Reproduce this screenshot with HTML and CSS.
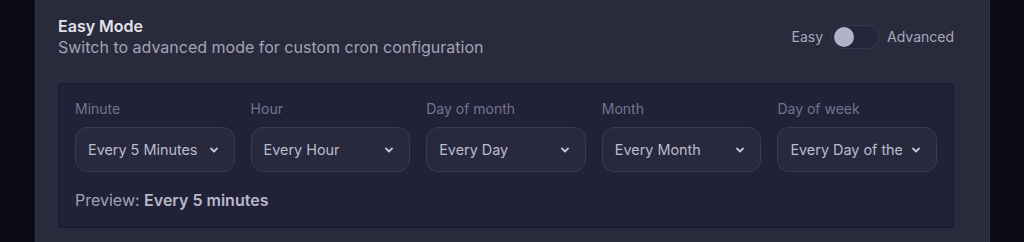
FILE: index.html
```html
<!DOCTYPE html>
<html lang="en">
<head>
    <meta charset="UTF-8">
    <meta name="viewport" content="width=device-width, initial-scale=1.0">
    <title>Schedule</title>
    <link rel="stylesheet" href="styles.css">
</head>
<body>
    <div class="card">
        <div class="card-header">
            <div class="titles">
                <h2>Easy Mode</h2>
                <p>Switch to advanced mode for custom cron configuration</p>
            </div>
            <div class="mode-switch">
                <span>Easy</span>
                <span class="toggle"><span class="knob"></span></span>
                <span>Advanced</span>
            </div>
        </div>

        <div class="cron-panel">
            <div class="cron-fields">
                <div class="field">
                    <label>Minute</label>
                    <div class="select"><span class="value">Every 5 Minutes</span><svg viewBox="0 0 12 12"><path d="M3 4.5l3 3 3-3"/></svg></div>
                </div>
                <div class="field">
                    <label>Hour</label>
                    <div class="select"><span class="value">Every Hour</span><svg viewBox="0 0 12 12"><path d="M3 4.5l3 3 3-3"/></svg></div>
                </div>
                <div class="field">
                    <label>Day of month</label>
                    <div class="select"><span class="value">Every Day</span><svg viewBox="0 0 12 12"><path d="M3 4.5l3 3 3-3"/></svg></div>
                </div>
                <div class="field">
                    <label>Month</label>
                    <div class="select"><span class="value">Every Month</span><svg viewBox="0 0 12 12"><path d="M3 4.5l3 3 3-3"/></svg></div>
                </div>
                <div class="field">
                    <label>Day of week</label>
                    <div class="select"><span class="value">Every Day of the Week</span><svg viewBox="0 0 12 12"><path d="M3 4.5l3 3 3-3"/></svg></div>
                </div>
            </div>
            <div class="preview">Preview: <strong>Every 5 minutes</strong></div>
        </div>
    </div>
</body>
</html>
```

FILE: styles.css
```css
body {
    margin: 0;
    height: 242px;
    overflow: hidden;
    background: #0b0b17;
    font-family: Inter, "Noto Sans", sans-serif;
}

.card {
    margin-left: 35px;
    width: 955px;
    height: 242px;
    box-sizing: border-box;
    padding: 16px 35px 0 22px;
    background: #2a2a3d;
    border-left: 1px solid #34344a;
    border-right: 1px solid #34344a;
}

.card-header {
    display: flex;
    justify-content: space-between;
    align-items: center;
}

.titles h2 {
    margin: 0;
    font-size: 16px;
    line-height: 20px;
    font-weight: 600;
    color: #e2e2ea;
}

.titles p {
    margin: 1px 0 0;
    font-size: 16px;
    line-height: 20px;
    color: #a3a3b4;
}

.mode-switch {
    display: flex;
    align-items: center;
    gap: 8px;
    font-size: 14px;
    color: #a8a8ba;
}

.toggle {
    display: flex;
    align-items: center;
    width: 48px;
    height: 24px;
    box-sizing: border-box;
    padding: 0 2px;
    border: 1px solid #37374d;
    border-radius: 12px;
    background: #26263a;
}

.knob {
    width: 20px;
    height: 20px;
    border-radius: 50%;
    background: #b2b2c8;
}

.cron-panel {
    margin-top: 26px;
    padding: 16px 16px 17px;
    background: #212138;
    border: 1px solid #17173a;
    border-radius: 4px;
}

.cron-fields {
    display: grid;
    grid-template-columns: repeat(5, minmax(0, 1fr));
    gap: 16px;
}

.field label {
    display: block;
    font-size: 14px;
    line-height: 18px;
    color: #74748e;
    margin-bottom: 9px;
}

.select {
    display: flex;
    align-items: center;
    gap: 8px;
    height: 45px;
    box-sizing: border-box;
    padding: 0 14px 0 12px;
    background: #29293e;
    border: 1px solid #3a3a52;
    border-radius: 12px;
    font-size: 14.4px;
    color: #bcbccb;
}

.select .value {
    flex: 1;
    min-width: 0;
    white-space: nowrap;
    overflow: hidden;
}

.select svg {
    width: 12px;
    height: 12px;
    flex-shrink: 0;
    fill: none;
    stroke: #c4c4d4;
    stroke-width: 1.8;
    stroke-linecap: round;
    stroke-linejoin: round;
}

.preview {
    margin-top: 18px;
    font-size: 16px;
    line-height: 20px;
    color: #a3a3b4;
}

.preview strong {
    font-weight: 600;
    color: #b8b8c8;
}
```
